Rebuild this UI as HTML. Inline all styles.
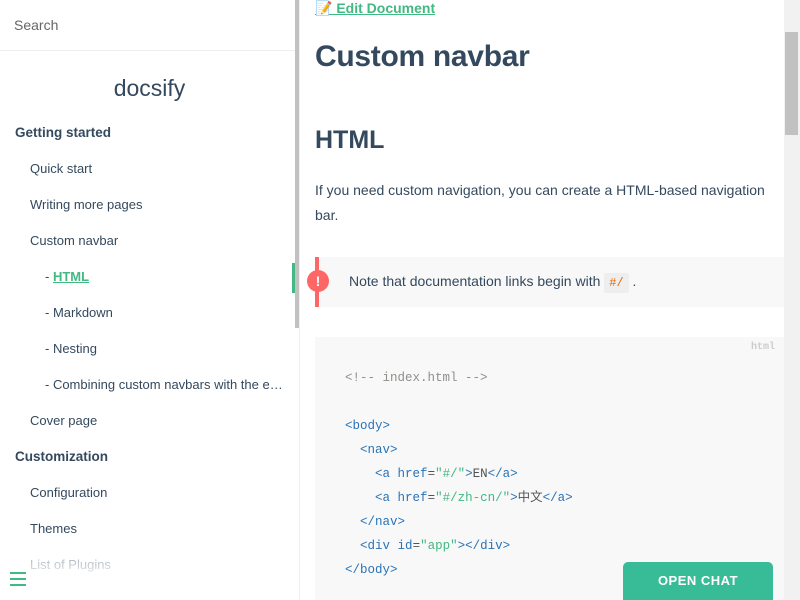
<!DOCTYPE html>
<html style="overflow:hidden;width:800px;height:600px"><head><meta charset="utf-8"><style>
*{margin:0;padding:0;box-sizing:border-box}
body{width:800px;height:600px;overflow:hidden;font-family:"Liberation Sans","Noto Sans CJK SC",sans-serif;color:#34495e;background:#fff;position:relative}
.side{position:absolute;left:0;top:0;width:300px;height:600px;border-right:1px solid #eee;overflow:hidden}
.search{height:51px;border-bottom:1px solid #eee;padding:17px 14px;font-size:14px;color:#666}
.logo{text-align:center;font-size:23px;font-weight:300;color:#34495e;margin-top:24px;height:30px}
.nav{position:absolute;left:0;top:120px;width:292px;font-size:13px}
.nav div{height:36px;line-height:26px;white-space:nowrap;overflow:hidden;text-overflow:ellipsis}
.h{padding-left:15px;font-weight:bold;font-size:13.5px}
.l1{padding-left:30px}
.l2{padding-left:45px}
.act a{color:#42b983;font-weight:bold;text-decoration:underline}
.fade{position:absolute;left:0;top:540px;width:295px;height:60px;background:linear-gradient(rgba(255,255,255,.3),#fff 70%)}
.sb{position:absolute;left:295px;top:0;width:5px;height:328px;background:#c1c1c1}
.mark{position:absolute;left:292px;top:263px;width:3px;height:30px;background:#42b983}
.main{position:absolute;left:300px;top:0;width:484px;height:600px;overflow:hidden}
.edit{position:absolute;left:15px;top:0;font-size:14px;color:#42b983;font-weight:bold;text-decoration:underline}
h1{position:absolute;left:15px;top:40px;font-size:30px;font-weight:bold;letter-spacing:-.3px}
h2{position:absolute;left:15px;top:126px;font-size:25px;font-weight:bold}
p{position:absolute;left:15px;top:178px;width:468px;font-size:14px;line-height:25px}
.tip{position:absolute;left:15px;top:257px;width:469px;height:50px;background:#f8f8f8;border-left:4px solid #f66;font-size:14px;padding:16px 30px}
.ex{position:absolute;left:-12px;top:13px;width:22px;height:22px;border-radius:50%;background:#f66;color:#fff;font-weight:bold;font-size:14px;text-align:center;line-height:22px}
code{font-family:"Liberation Mono",monospace;font-size:12px;background:#eee;color:#e96900;padding:3px 5px;border-radius:2px}
.code{position:absolute;left:15px;top:337px;width:469px;height:263px;overflow:hidden;background:#f8f8f8;font-family:"Liberation Mono","Noto Sans CJK SC",monospace;font-size:12.5px;color:#525252;padding:29px 30px;line-height:24px;white-space:pre}
.lang{position:absolute;right:9px;top:4px;font-size:10px;color:#ccc;font-weight:bold;line-height:14px}
.t{color:#2973b7}.s{color:#42b983}.c{color:#8e908c}
.vs{position:absolute;left:784px;top:0;width:16px;height:600px;background:#f1f1f1}
.th{position:absolute;left:785px;top:32px;width:13px;height:103px;background:#c1c1c1}
.chat{position:absolute;left:623px;top:562px;width:150px;height:38px;background:#37bc97;color:#fff;border-radius:5px 5px 0 0;font-size:13px;font-weight:bold;text-align:center;line-height:38px;letter-spacing:.5px}
.ham{position:absolute;left:10px;top:572px;width:16px}
.ham i{display:block;height:2px;background:#42b983;margin-bottom:4px}
</style></head><body>
<div class="side">
<div class="search">Search</div>
<div class="logo">docsify</div>
<div class="nav">
<div class="h">Getting started</div>
<div class="l1">Quick start</div>
<div class="l1">Writing more pages</div>
<div class="l1">Custom navbar</div>
<div class="l2 act">- <a>HTML</a></div>
<div class="l2">- Markdown</div>
<div class="l2">- Nesting</div>
<div class="l2">- Combining custom navbars with the emoji plugin</div>
<div class="l1">Cover page</div>
<div class="h">Customization</div>
<div class="l1">Configuration</div>
<div class="l1">Themes</div>
<div class="l1">List of Plugins</div>
<div class="l1">Write a Plugin</div>
</div>
<div class="fade"></div>
<div class="sb"></div>
<div class="mark"></div>
</div>
<div class="main">
<div class="edit">📝 Edit Document</div>
<h1>Custom navbar</h1>
<h2>HTML</h2>
<p>If you need custom navigation, you can create a HTML-based navigation bar.</p>
<div class="tip"><span class="ex">!</span>Note that documentation links begin with <code>#/</code> .</div>
<div class="code"><span class="lang">html</span><span class="c">&lt;!-- index.html --&gt;</span>

<span class="t">&lt;body&gt;</span>
  <span class="t">&lt;nav&gt;</span>
    <span class="t">&lt;a</span> <span class="t">href</span>=<span class="s">"#/"</span><span class="t">&gt;</span>EN<span class="t">&lt;/a&gt;</span>
    <span class="t">&lt;a</span> <span class="t">href</span>=<span class="s">"#/zh-cn/"</span><span class="t">&gt;</span>中文<span class="t">&lt;/a&gt;</span>
  <span class="t">&lt;/nav&gt;</span>
  <span class="t">&lt;div</span> <span class="t">id</span>=<span class="s">"app"</span><span class="t">&gt;&lt;/div&gt;</span>
<span class="t">&lt;/body&gt;</span></div>
</div>
<div class="vs"></div><div class="th"></div>
<div class="chat">OPEN CHAT</div>
<div class="ham"><i></i><i></i><i></i></div>
</body></html>
